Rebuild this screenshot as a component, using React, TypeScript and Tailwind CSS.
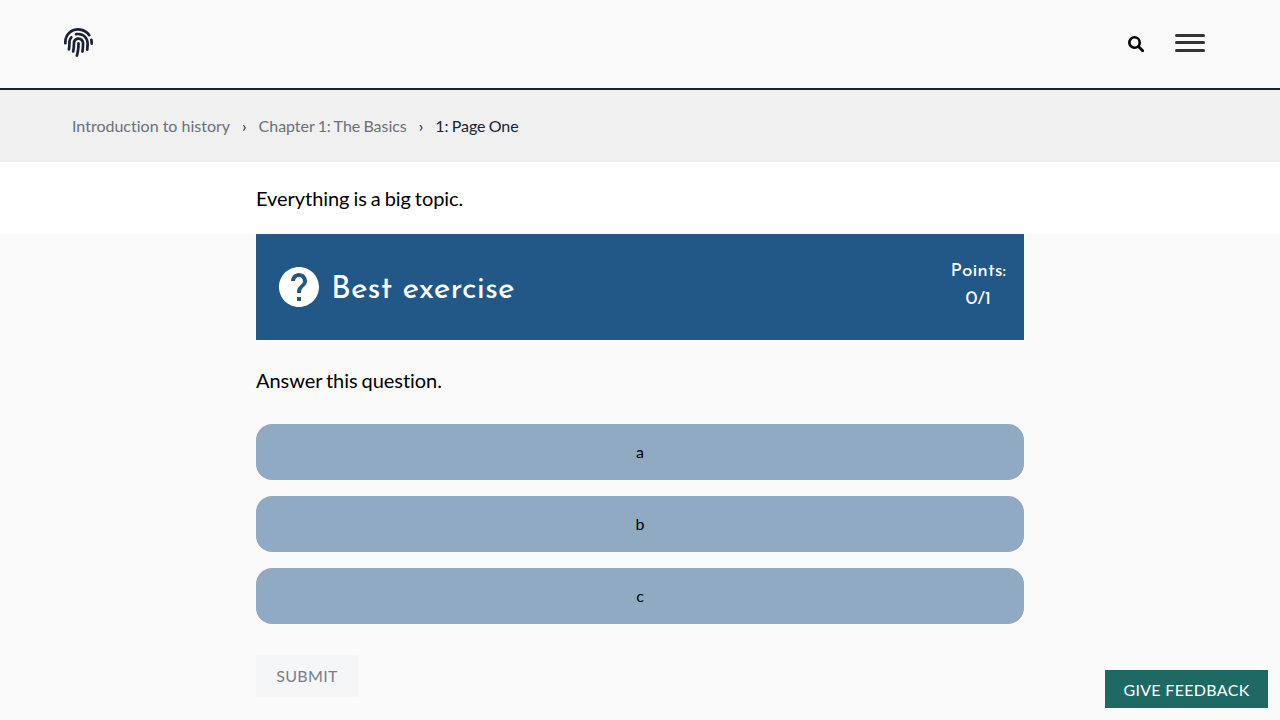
import { FaFingerprint } from 'react-icons/fa';
export default function App() {
  return (
    <div className="h-[720px] w-[1280px] overflow-hidden bg-[#fafafa] font-['Lato',sans-serif] text-black [font-variant-ligatures:none]">
      <header className="flex h-[90px] items-start justify-between border-b-2 border-[#1a2333] bg-[#f9f9f9] pl-16 pr-[75px]">
        <FaFingerprint className="mt-7 size-[29px] text-[#1a2333]" />
        <div className="flex">
          <svg viewBox="0 0 16 16" className="mt-9 size-4" fill="none" stroke="currentColor"><circle cx="6.5" cy="6.5" r="5.2" strokeWidth="2.6" /><path d="m10.5 10.5 4.2 4.2" strokeWidth="2.8" strokeLinecap="round" /></svg>
          <div className="ml-[31px] mt-[34px] flex flex-col">
            <span className="h-[3px] w-[30px] rounded bg-[#333]" />
            <span className="mt-1 h-[3px] w-[30px] rounded bg-[#333]" />
            <span className="mt-[5px] h-[3px] w-[30px] rounded bg-[#333]" />
          </div>
        </div>
      </header>
      <nav className="flex h-[72px] items-center gap-3 bg-[#f0f0f0] pl-[72px] text-base text-[#6b6f7a]">
        <a>Introduction to history</a><span className="text-[#1a2333]">›</span>
        <a className="tracking-[-0.04px] [word-spacing:-0.8px]">Chapter 1: The Basics</a><span className="text-[#1a2333]">›</span>
        <span className="tracking-[-0.04px] text-[#1a2333] [word-spacing:-0.8px]">1: Page One</span>
      </nav>
      <section className="h-[72px] bg-white pl-64 pt-5 text-[20px] leading-8 tracking-[-0.05px] [word-spacing:-1.1px]">Everything is a big topic.</section>
      <main className="mx-auto w-[768px]">
        <div className="flex h-[106px] bg-[#215887] text-white font-['Josefin_Sans',Lato,sans-serif]">
          <svg viewBox="0 0 24 24" className="ml-[19px] mt-[29px] size-12" fill="currentColor"><path d="M12 2C6.48 2 2 6.48 2 12s4.48 10 10 10 10-4.48 10-10S17.52 2 12 2zm1 17h-2v-2h2v2zm2.07-7.75-.9.92C13.45 12.9 13 13.5 13 15h-2v-.5c0-1.1.45-2.1 1.17-2.83l1.24-1.26c.37-.36.59-.86.59-1.41 0-1.1-.9-2-2-2s-2 .9-2 2H8c0-2.21 1.79-4 4-4s4 1.79 4 4c0 .88-.36 1.68-.93 2.25z" /></svg>
          <h2 className="ml-2 mt-[34px] text-[32px] leading-[44px] tracking-[0.1px]">Best exercise</h2>
          <div className="ml-auto mr-[18px] mt-6 text-center text-[19.2px] leading-7">Points:<br />0/1</div>
        </div>
        <p className="mt-6 text-[20px] leading-8 tracking-[-0.05px] [word-spacing:-1.1px]">Answer this question.</p>
        <div className="mt-7 flex flex-col gap-4">
          {['a', 'b', 'c'].map(x => <button key={x} className="h-14 rounded-2xl bg-[#91aac4] text-base">{x}</button>)}
        </div>
        <button className="mt-[31px] h-[42px] w-[102px] bg-[#f5f6f8] text-base tracking-[0.02em] text-[#7b7c87]">SUBMIT</button>
      </main>
      <button className="fixed bottom-3 right-3 h-[38px] w-[163px] bg-[#1f6964] pt-0.5 text-base tracking-[0.02em] text-white">GIVE FEEDBACK</button>
    </div>
  );
}
